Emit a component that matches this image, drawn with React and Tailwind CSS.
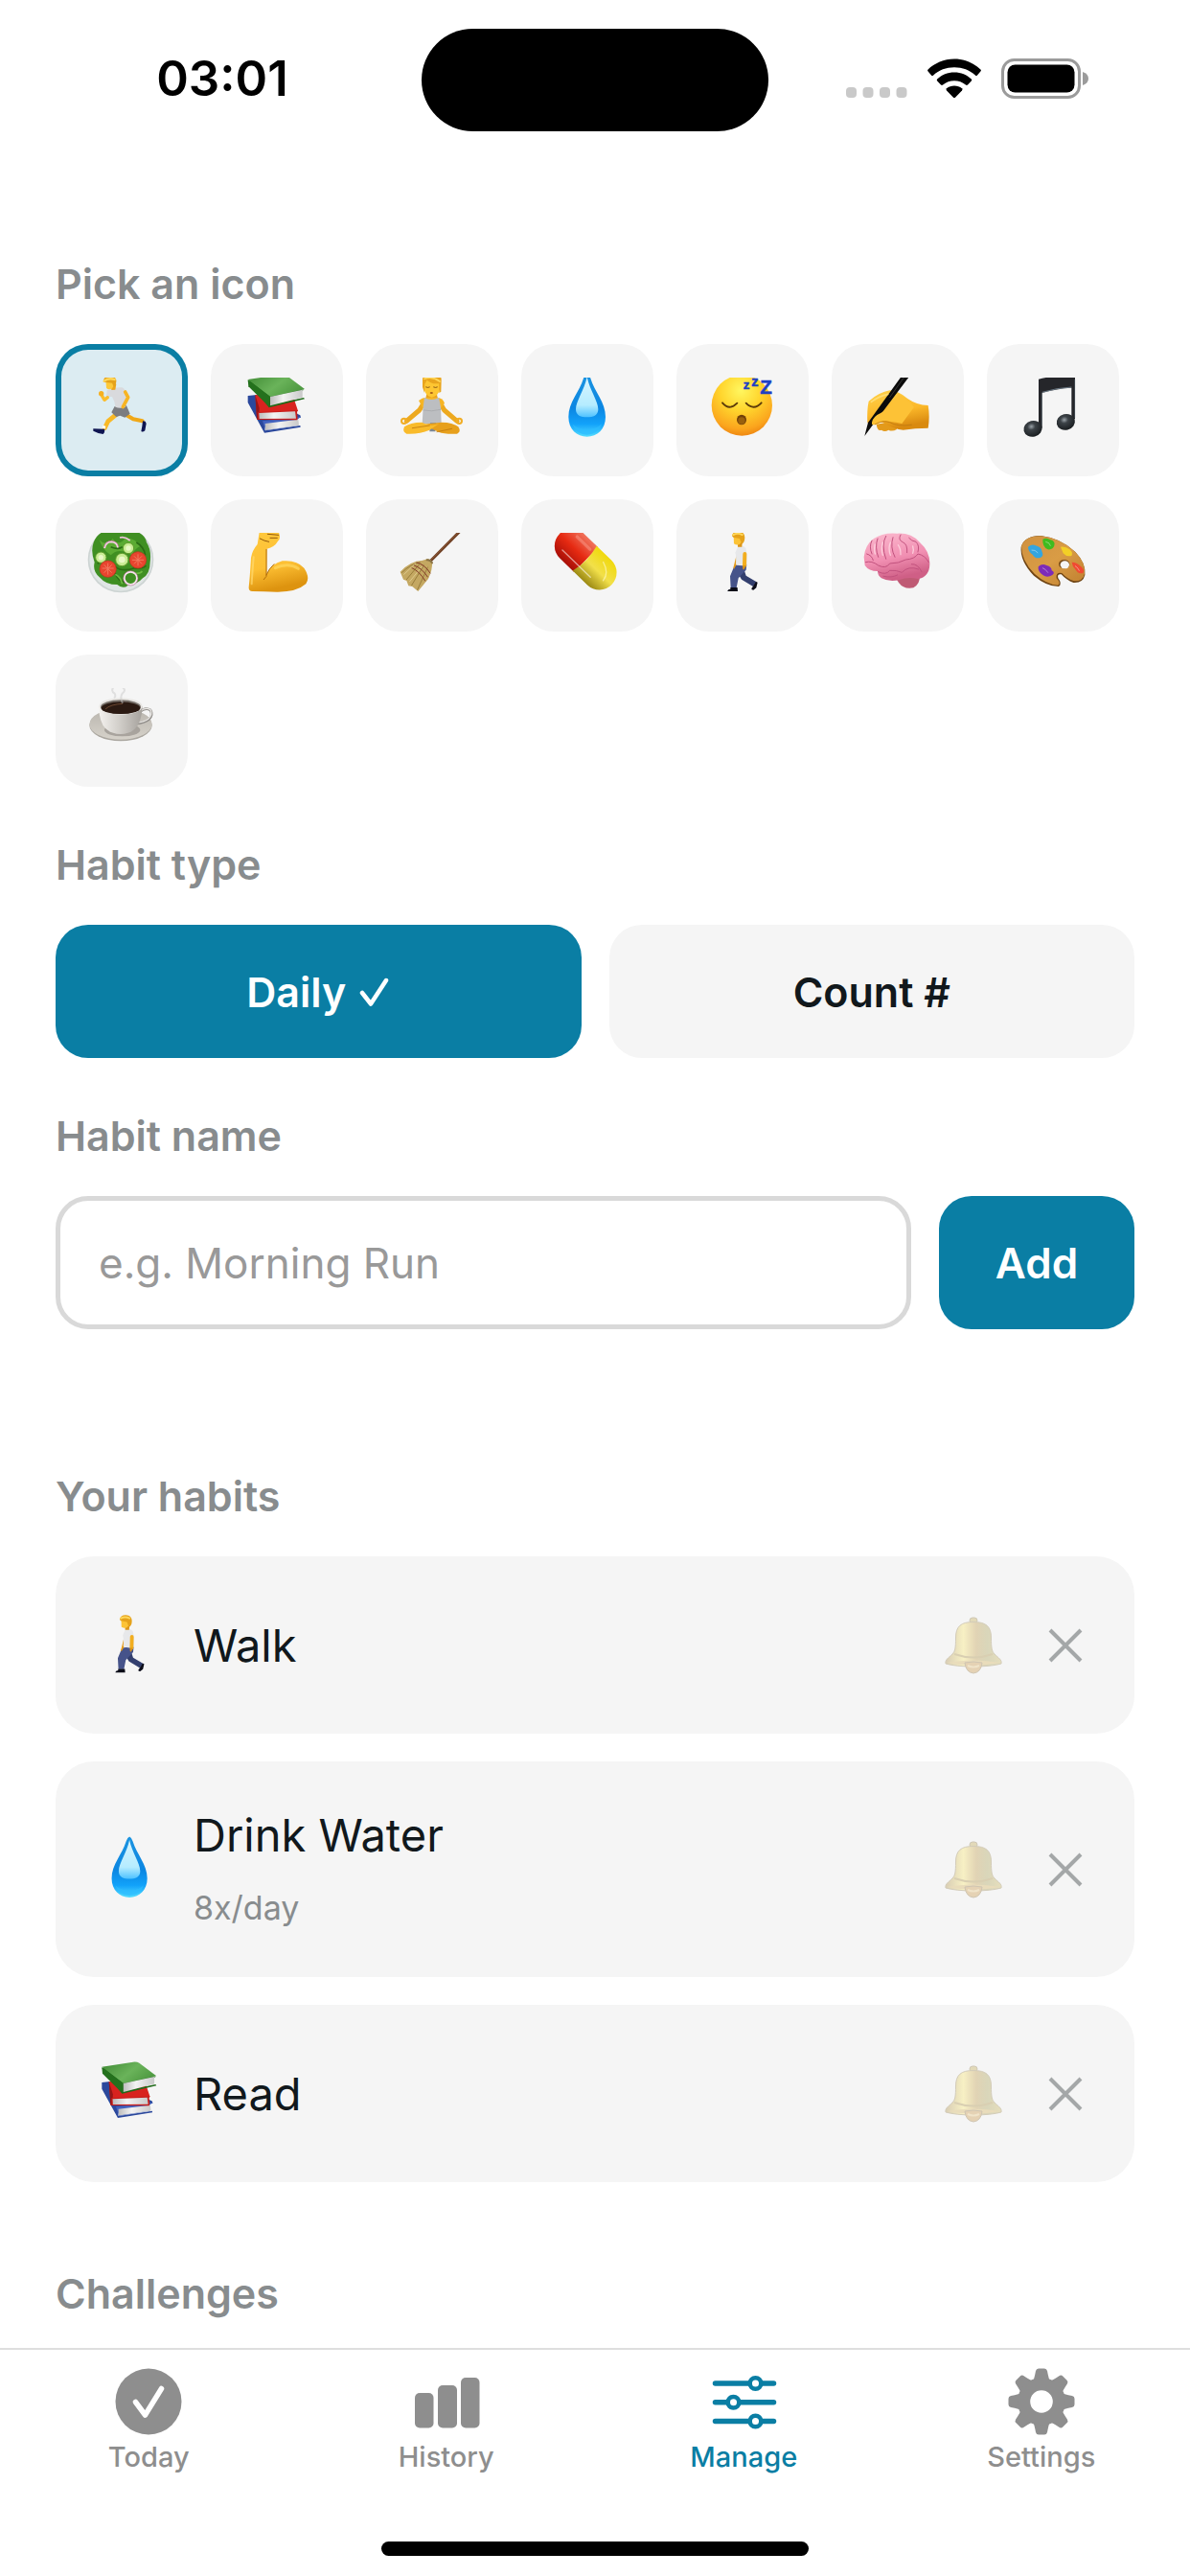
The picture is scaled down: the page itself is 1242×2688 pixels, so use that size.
import { useState } from "react";

/* ---------- Emoji drawings ---------- */

const Runner = () => (
    <g strokeLinecap="round" strokeLinejoin="round">
        <path d="M273 276 L296 290 L325 296" fill="none" stroke="#f0a818" strokeWidth="12" />
        <path d="M326 296 L334 297 L337 304 L333 326 Q326 332 321 328 L324 312 Z" fill="#0f1552" />
        <path d="M247 272 L217 297 L207 318" fill="none" stroke="#f9b926" strokeWidth="14" />
        <path d="M210 312 L201 309 L199 318 L208 321 Z" fill="#fff" />
        <path d="M171 320 L207 321 Q208 330 202 337 Q188 336 171 327 Z" fill="#0f1552" />
        <path d="M238 250 L275 248 L286 273 L270 285 L255 279 L243 283 L228 269 Z" fill="#7c7d80" />
        <path d="M214 200 Q240 188 262 191 Q276 200 272 214 L272 252 Q255 258 240 252 Q238 232 230 220 L212 221 Z" fill="#d9dadd" />
        <path d="M216 222 L206 230 L196 213" fill="none" stroke="#fbbd2c" strokeWidth="10" />
        <circle cx="196" cy="210" r="8" fill="#f6b021" />
        <path d="M271 205 L280 222 L264 252" fill="none" stroke="#f7b423" strokeWidth="11" />
        <path d="M227 182 L243 180 L240 198 L228 199 Z" fill="#eda51c" />
        <path d="M210 166 L236 163 Q240 183 230 194 Q218 200 212 192 Z" fill="#fdc93a" />
        <path d="M203 174 Q202 156 220 156 Q240 154 243 168 Q244 184 236 191 L230 177 L212 175 Z" fill="#e5a21b" />
        <path d="M205 171 Q218 160 238 166" fill="none" stroke="#ffd75a" strokeWidth="7" />
    </g>
);

const Books = () => (
    <g strokeLinejoin="round">
        <defs>
            <linearGradient id="bookGreen" x1="0" y1="0" x2="1" y2="0.5">
                <stop offset="0" stopColor="#3f8a34" />
                <stop offset="0.6" stopColor="#6ab35a" />
                <stop offset="1" stopColor="#4f9a42" />
            </linearGradient>
            <linearGradient id="bookPages" x1="0" y1="0" x2="1" y2="0">
                <stop offset="0" stopColor="#bdbdbd" />
                <stop offset="0.4" stopColor="#f3f3f3" />
                <stop offset="1" stopColor="#c9c9c9" />
            </linearGradient>
        </defs>
        <path d="M654 217 L682 214 L818 278 L820 285 L705 300 L708 326 L818 310 L819 315 L706 333 L654 238 Z" fill="#2b489c" />
        <path d="M700 296 L820 283 L808 292 L811 309 L710 326 Z" fill="#4262bf" />
        <path d="M708 304 L812 291 L814 309 L709 325 Z" fill="url(#bookPages)" />
        <path d="M677 214 L796 219 L811 264 L683 292 Z" fill="#d8231f" />
        <path d="M677 214 L690 255 L688 292 L682 290 Z" fill="#971616" />
        <path d="M685 268 L811 262 L808 268 L810 288 L808 293 L686 292 Z" fill="#c71d1b" />
        <path d="M689 271 L802 266 L805 288 L690 289 Z" fill="url(#bookPages)" />
        <path d="M654 170 L718 251 L720 254 L832 227 L829 223 L725 245 L830 198 L690 172 Z" fill="#1e6a18" />
        <path d="M654 166 L761 150 Q770 150 776 154 L832 196 L724 220 Z" fill="url(#bookGreen)" />
        <path d="M654 167 L724 219 L720 251 L656 188 Z" fill="#24711d" />
        <path d="M724 220 L825 198 L825 222 L724 248 Z" fill="url(#bookPages)" />
    </g>
);

const Yoga = () => (
    <g strokeLinecap="round" strokeLinejoin="round">
        <path d="M254 205 L283 205 L288 226 L250 226 Z" fill="#e9a11b" />
        <path d="M245 238 L230 262 L190 296" fill="none" stroke="#eda91f" strokeWidth="15" />
        <path d="M294 238 L308 262 L348 296" fill="none" stroke="#eda91f" strokeWidth="15" />
        <circle cx="182" cy="296" r="8" fill="none" stroke="#f1ad24" strokeWidth="6" />
        <circle cx="355" cy="296" r="8" fill="none" stroke="#f1ad24" strokeWidth="6" />
        <path d="M228 232 Q240 222 252 222 L286 222 Q304 224 309 240 L297 256 L241 256 Z" fill="#f6b526" />
        <path d="M246 222 Q268 236 291 222 L297 252 L299 304 L239 304 L242 252 Z" fill="#bcbec1" />
        <path d="M242 262 Q268 268 297 260" fill="none" stroke="#a3a5a8" strokeWidth="2" />
        <path d="M264 302 L282 302 L280 329 L262 329 Z" fill="#7b8796" />
        <path d="M300 300 Q335 300 352 314 Q362 330 348 336 Q310 338 290 330 L240 306 Z" fill="#e7a01c" />
        <path d="M238 300 Q200 300 183 314 Q176 330 190 336 Q230 338 262 324 L292 304 Q265 316 238 300 Z" fill="#f9bb2b" />
        <path d="M208 318 L262 310 M285 330 L332 320" fill="none" stroke="#bf7a10" strokeWidth="2.5" />
        <path d="M243 168 H295 V194 Q290 218 269 222 Q249 218 244 194 Z" fill="#fdc632" />
        <path d="M240 190 V166 Q242 142 269 142 Q297 142 299 166 L298 204 L292 208 V178 Q270 182 254 168 L247 180 L246 208 Z" fill="#e9a51d" />
        <path d="M246 164 Q270 154 294 172" fill="none" stroke="#ffd658" strokeWidth="5" />
        <path d="M251 190 Q257 193 262 190 M275 190 Q281 193 286 190" fill="none" stroke="#6f4210" strokeWidth="2.5" />
        <ellipse cx="268" cy="208" rx="5" ry="2.5" fill="#8a3b12" />
    </g>
);

const Drop = () => (
    <g>
        <defs>
            <linearGradient id="dropBody" x1="0" y1="0" x2="0" y2="1">
                <stop offset="0" stopColor="#1c94e0" />
                <stop offset="0.55" stopColor="#0b86e2" />
                <stop offset="0.8" stopColor="#12a2fa" />
                <stop offset="1" stopColor="#53dcff" />
            </linearGradient>
            <linearGradient id="dropShine" x1="0" y1="0" x2="0" y2="1">
                <stop offset="0" stopColor="#d9f5ff" />
                <stop offset="0.7" stopColor="#b5ecff" />
                <stop offset="1" stopColor="#4ec2ff" />
            </linearGradient>
        </defs>
        <path d="M754 147 Q748 149 743 162 C730 205 696 236 696 283 C696 322 722 345 754 345 C786 345 812 322 812 283 C812 236 778 205 765 162 Q760 149 754 147 Z" fill="url(#dropBody)" />
        <path d="M754 158 C746 198 719 234 719 259 C719 279 735 284 754 284 C773 284 789 279 789 259 C789 234 762 198 754 158 Z" fill="url(#dropShine)" />
        <path d="M708 305 Q720 338 754 339 Q788 338 800 305 Q785 322 754 322 Q723 322 708 305 Z" fill="#2cbcff" opacity="0.7" />
    </g>
);

const Sleeping = () => (
    <g strokeLinecap="round">
        <defs>
            <radialGradient id="sleepFace" cx="0.48" cy="0.25" r="0.75">
                <stop offset="0" stopColor="#fff760" />
                <stop offset="0.45" stopColor="#ffd52d" />
                <stop offset="0.85" stopColor="#fba51d" />
                <stop offset="1" stopColor="#ef8812" />
            </radialGradient>
        </defs>
        <circle cx="1239" cy="247" r="95" fill="url(#sleepFace)" />
        <path d="M1178 239 Q1200 265 1224 240 M1252 240 Q1276 265 1300 239" fill="none" stroke="#5c3b0a" strokeWidth="5.5" />
        <ellipse cx="1238" cy="292" rx="15" ry="16" fill="#703f08" />
        <ellipse cx="1238" cy="295" rx="11" ry="11" fill="#99600d" />
    </g>
);

const SleepLetters = () => (
    <g fill="#1d3fc4" stroke="#1d3fc4" strokeWidth="1.5" fontFamily="Liberation Sans, sans-serif" fontWeight="700">
        <text x="1243" y="196" fontSize="40">z</text>
        <text x="1269" y="186" fontSize="44">z</text>
        <text x="1296" y="212" fontSize="62">Z</text>
    </g>
);

const Writing = () => (
    <g strokeLinecap="round" strokeLinejoin="round">
        <defs>
            <linearGradient id="writeHand" x1="0" y1="0" x2="0.3" y2="1">
                <stop offset="0" stopColor="#ffd24b" />
                <stop offset="0.6" stopColor="#fcb92a" />
                <stop offset="1" stopColor="#d98a10" />
            </linearGradient>
        </defs>
        <path d="M220 306 Q224 330 236 324 Q246 332 258 324 Q270 330 284 322 L280 296 Z" fill="#e39a1b" />
        <path d="M196 234 Q228 206 262 200 Q290 202 318 226 Q346 246 382 247 Q388 282 382 318 Q340 318 304 324 Q276 322 240 300 L192 302 Q190 262 196 234 Z" fill="url(#writeHand)" />
        <path d="M297 158 L322 158 L208 309 L183 343 L194 301 Z" fill="#0b0b0b" />
        <path d="M306 160 L262 222" stroke="#4a4a4a" strokeWidth="2" />
        <path d="M206 300 Q210 282 232 272 Q254 262 268 242 L290 212 Q322 230 338 252 L300 304 Q262 296 240 296 Q218 312 206 306 Z" fill="#fdc236" />
        <path d="M216 306 Q240 292 262 300 Q286 314 330 308" fill="none" stroke="#bf7a10" strokeWidth="2.5" />
        <path d="M204 236 Q228 218 256 212" fill="none" stroke="#ffdd74" strokeWidth="5" />
    </g>
);

const Music = () => (
    <g>
        <defs>
            <radialGradient id="noteHead" cx="0.45" cy="0.35" r="0.7">
                <stop offset="0" stopColor="#9aa2a8" />
                <stop offset="0.3" stopColor="#3c4247" />
                <stop offset="1" stopColor="#15181b" />
            </radialGradient>
        </defs>
        <path d="M727 165 Q782 152 841 148 V290 H830 V192 Q785 194 738 208 V318 H727 Z" fill="#25262a" />
        <path d="M738 206 Q785 192 830 190" fill="none" stroke="#8ea2b2" strokeWidth="2" />
        <path d="M840 166 V286 M737 210 V308" fill="none" stroke="#5b6a76" strokeWidth="1.5" />
        <ellipse cx="709" cy="320" rx="29" ry="25" transform="rotate(-14 709 320)" fill="url(#noteHead)" />
        <ellipse cx="812" cy="299" rx="29" ry="25" transform="rotate(-14 812 299)" fill="url(#noteHead)" />
    </g>
);

const Salad = () => (
    <g>
        <circle cx="257" cy="730" r="103" fill="#cdd4d3" />
        <circle cx="257" cy="730" r="98" fill="#e0e6e5" />
        <path d="M172 676 Q186 640 220 640 Q262 626 300 640 Q334 650 338 676 Q354 700 349 738 Q349 774 326 788 Q308 808 280 810 Q264 824 246 808 Q210 808 192 786 Q168 768 175 738 Q162 704 172 676 Z" fill="#3f8f22" />
        <path d="M190 668 Q210 690 232 664 Q250 690 270 664 Q300 660 318 688 Q300 696 292 716 Q250 690 226 716 Q200 700 190 668 Z" fill="#5bab33" />
        <path d="M184 742 Q208 730 240 752 Q262 770 300 756 Q330 760 336 748 M238 770 Q250 800 274 800 M226 690 Q250 700 262 690 M306 676 Q330 690 334 716" fill="none" stroke="#2a6c14" strokeWidth="5" />
        <path d="M240 776 Q256 784 262 806 M296 772 Q318 776 324 766" fill="none" stroke="#6cba40" strokeWidth="5" />
        <path d="M206 694 Q210 674 228 674 Q246 676 248 692" fill="none" stroke="#f3d3e4" strokeWidth="6" />
        <path d="M204 692 Q210 671 228 671 Q248 673 250 690" fill="none" stroke="#b84a86" strokeWidth="1.5" />
        <path d="M254 661 Q270 656 286 670" fill="none" stroke="#efc5dc" strokeWidth="5" />
        <g fill="#c9ec94" stroke="#5f9c2a" strokeWidth="3">
            <circle cx="195" cy="723" r="17" />
            <circle cx="281" cy="694" r="17" />
            <circle cx="261" cy="730" r="20" />
        </g>
        <g fill="#e9f8c6">
            <circle cx="195" cy="723" r="8" />
            <circle cx="281" cy="694" r="8" />
            <circle cx="261" cy="730" r="10" />
        </g>
        <g fill="#e8452f" stroke="#c52f1e" strokeWidth="2">
            <circle cx="217" cy="759" r="26" />
            <circle cx="311" cy="731" r="26" />
        </g>
        <path d="M199 757 H235 M217 741 V777 M205 746 L229 771 M229 746 L205 771 M293 731 H329 M311 713 V749 M299 719 L323 743 M323 719 L299 743" stroke="#f37a60" strokeWidth="3" />
        <circle cx="288" cy="788" r="20" fill="none" stroke="#f6e4ec" strokeWidth="6" />
        <circle cx="288" cy="788" r="23" fill="none" stroke="#b0578c" strokeWidth="1.5" />
    </g>
);

const Muscle = () => (
    <g strokeLinecap="round" strokeLinejoin="round">
        <defs>
            <linearGradient id="armSkin" x1="0" y1="0" x2="0.2" y2="1">
                <stop offset="0" stopColor="#ffc93e" />
                <stop offset="0.65" stopColor="#fdc034" />
                <stop offset="1" stopColor="#dd930f" />
            </linearGradient>
        </defs>
        <path d="M691 638 Q700 628 724 632 Q748 632 752 648 Q758 664 748 672 Q738 690 714 696 L713 776 Q728 742 762 734 Q808 730 830 756 Q850 786 836 806 Q806 832 744 831 Q706 830 668 829 Q656 828 657 816 Q660 790 664 724 Q668 700 684 682 Z" fill="url(#armSkin)" />
        <path d="M712 698 V782 L704 792 M712 778 Q720 758 736 744" fill="none" stroke="#b16d0a" strokeWidth="3" />
        <path d="M716 650 L750 653 M724 662 L746 662 M692 664 Q706 672 720 674" fill="none" stroke="#93590b" strokeWidth="3" />
        <path d="M672 722 Q668 770 666 806" fill="none" stroke="#ffda70" strokeWidth="6" opacity="0.7" />
        <path d="M740 756 Q780 738 812 758" fill="none" stroke="#ffd860" strokeWidth="9" opacity="0.7" />
    </g>
);

const Broom = () => (
    <g strokeLinecap="round" strokeLinejoin="round">
        <path d="M266 733 L360 638" stroke="#6f4024" strokeWidth="9" strokeLinecap="butt" />
        <path d="M268 729 L360 636" stroke="#9a6440" strokeWidth="2" />
        <path d="M250 729 Q262 724 270 736 Q272 760 258 790 L226 829 L208 814 L196 812 L190 796 L180 792 L170 768 Q202 734 238 733 Z" fill="#c4a862" />
        <path d="M176 770 Q202 744 232 738 M190 792 L230 744 M206 810 L244 748 M224 824 L256 754" fill="none" stroke="#8f7434" strokeWidth="2.5" />
        <path d="M182 776 L218 742 M200 798 L238 752" fill="none" stroke="#e2cf93" strokeWidth="2.5" />
        <path d="M222 739 Q246 744 264 772 M214 748 Q238 756 256 784 M207 756 Q230 766 248 796" fill="none" stroke="#7d3224" strokeWidth="2.8" />
        <path d="M254 731 Q264 730 270 740" fill="none" stroke="#8a7344" strokeWidth="6" />
    </g>
);

const Pill = () => (
    <g>
        <defs>
            <linearGradient id="pillRed" x1="0" y1="0" x2="0" y2="1">
                <stop offset="0" stopColor="#f0735c" />
                <stop offset="0.5" stopColor="#e62a12" />
                <stop offset="1" stopColor="#a80f08" />
            </linearGradient>
            <linearGradient id="pillYellow" x1="0" y1="0" x2="0" y2="1">
                <stop offset="0" stopColor="#f0d90c" />
                <stop offset="0.5" stopColor="#f2e04a" />
                <stop offset="1" stopColor="#9c8a14" />
            </linearGradient>
        </defs>
        <g transform="translate(751 730) rotate(44)">
            <path d="M0 -54 H-62 A54 54 0 0 0 -62 54 H0 Z" fill="url(#pillRed)" />
            <path d="M-6 -54 H58 A54 54 0 0 1 58 54 H-6 Q8 0 -6 -54 Z" fill="url(#pillYellow)" />
            <path d="M-74 30 H48" stroke="#fff" strokeWidth="4" strokeLinecap="round" opacity="0.55" />
            <path d="M44 -32 Q82 -20 84 10" fill="none" stroke="#fffbd0" strokeWidth="4" strokeLinecap="round" opacity="0.6" />
            <path d="M-70 -32 H-14" stroke="#ffb8aa" strokeWidth="10" strokeLinecap="round" opacity="0.35" />
        </g>
    </g>
);

const Walker = () => (
    <g strokeLinecap="round" strokeLinejoin="round">
        <path d="M1222 750 L1242 750 L1252 780 L1285 800 L1274 814 L1238 792 L1226 772 Z" fill="#333f6e" />
        <path d="M1272 816 L1283 799 L1288 801 L1284 818 L1275 825 Q1268 825 1269 820 Z" fill="#0b0c18" />
        <path d="M1216 748 L1254 744 L1252 762 L1228 788 L1222 818 L1204 818 L1202 782 Z" fill="#46538a" />
        <path d="M1203 817 H1225 L1226 829 H1194 Q1194 823 1203 822 Z" fill="#0b0c18" />
        <path d="M1222 716 L1214 748 Q1210 756 1214 760 L1222 746 Z" fill="#e49b19" />
        <path d="M1226 690 Q1240 682 1251 694 Q1256 712 1255 746 Q1238 752 1220 744 Q1222 716 1218 708 Z" fill="#e7e8ea" />
        <path d="M1248 712 L1247 748" fill="none" stroke="#f2ae20" strokeWidth="12" />
        <path d="M1242 748 Q1240 764 1246 760 L1252 748" fill="#dc9315" />
        <path d="M1226 676 L1240 676 L1239 690 L1226 690 Z" fill="#dd9618" />
        <path d="M1213 656 H1240 Q1242 672 1232 682 Q1222 686 1214 680 Z" fill="#fcc336" />
        <path d="M1208 656 Q1210 641 1228 641 Q1248 643 1248 660 Q1248 676 1238 681 L1232 664 L1212 660 Z" fill="#e5a21b" />
        <path d="M1212 652 Q1226 645 1240 652" fill="none" stroke="#ffd75a" strokeWidth="6" />
    </g>
);

const Brain = () => (
    <g strokeLinecap="round" strokeLinejoin="round">
        <defs>
            <linearGradient id="brainPink" x1="0" y1="0" x2="0.3" y2="1">
                <stop offset="0" stopColor="#fcbcd0" />
                <stop offset="0.6" stopColor="#f18fb2" />
                <stop offset="1" stopColor="#cf5f86" />
            </linearGradient>
        </defs>
        <path d="M284 792 Q320 768 356 776 Q358 806 336 818 Q306 824 290 802 Z" fill="#bf5a74" />
        <path d="M181 722 Q184 684 212 664 Q240 644 286 648 Q330 646 356 676 Q388 704 387 744 Q386 784 350 790 Q320 782 290 794 Q258 800 236 788 Q224 780 224 766 Q196 766 184 748 Z" fill="url(#brainPink)" />
        <path d="M186 738 Q206 732 226 748 Q250 760 262 742 Q290 742 312 730 Q340 728 350 712 Q372 716 384 738 M206 670 Q196 690 206 712 M224 664 Q214 690 226 722 M250 656 Q234 684 250 728 M272 660 Q262 690 278 722 M296 652 Q286 668 304 676 Q318 682 316 708 M322 662 Q330 672 344 674 Q356 686 350 706 M226 768 Q250 780 262 764 Q282 762 300 770 Q320 748 352 760 M242 782 Q268 788 286 778 M330 744 Q350 742 362 768 M190 712 Q206 716 210 732" fill="none" stroke="#c2527e" strokeWidth="3" />
        <path d="M216 682 Q212 700 216 712 M240 676 Q234 698 240 716 M264 676 Q256 694 264 716 M288 684 Q296 694 296 714 M334 688 Q338 700 334 710" fill="none" stroke="#ffd9e4" strokeWidth="4" opacity="0.8" />
    </g>
);

const Palette = () => (
    <g strokeLinejoin="round">
        <defs>
            <linearGradient id="paletteWood" x1="0" y1="0" x2="1" y2="1">
                <stop offset="0" stopColor="#cf9140" />
                <stop offset="0.5" stopColor="#d99c45" />
                <stop offset="1" stopColor="#c08030" />
            </linearGradient>
        </defs>
        <path d="M672 690 Q684 654 734 655 Q796 662 842 706 Q876 742 872 778 Q866 804 836 802 Q814 794 798 776 Q784 774 788 788 Q802 806 790 814 Q752 814 712 780 Q668 734 672 690 Z" fill="#6f4413" />
        <path d="M673 688 Q684 655 734 656 Q796 662 842 706 Q876 742 871 774 Q866 798 838 797 Q816 790 800 772 Q780 768 783 788 Q798 804 788 810 Q752 808 714 774 Q672 732 673 688 Z" fill="url(#paletteWood)" />
        <ellipse cx="807" cy="744" rx="17" ry="14" fill="#7a4c17" />
        <ellipse cx="809" cy="746" rx="14" ry="12" fill="#f5f5f5" />
        <path d="M694 690 Q706 680 718 686 Q736 690 738 706 Q744 718 732 724 Q716 728 708 714 Q694 704 694 690 Z" fill="#34a5df" />
        <path d="M740 666 Q752 660 764 668 Q780 672 776 686 Q772 700 756 698 Q738 690 740 666 Z" fill="#3fbb1f" />
        <path d="M796 690 Q812 688 824 698 Q836 708 830 718 Q814 722 804 710 Z" fill="#f3cf26" />
        <path d="M831 738 Q848 738 860 752 Q872 762 866 772 Q850 776 842 760 Q832 750 831 738 Z" fill="#f04a32" />
        <path d="M726 752 Q738 740 752 748 Q768 752 768 764 Q780 770 770 778 Q754 788 740 778 Q724 768 726 752 Z" fill="#7d2bb8" />
        <path d="M706 700 Q716 698 724 708 M750 674 Q762 676 764 686 M740 756 Q750 760 756 770 M842 750 Q850 754 854 764" fill="none" stroke="#fff" strokeWidth="3" strokeLinecap="round" opacity="0.4" />
    </g>
);

const Coffee = () => (
    <g strokeLinecap="round">
        <defs>
            <linearGradient id="cupBody" x1="0" y1="0" x2="1" y2="0">
                <stop offset="0" stopColor="#f4f2ef" />
                <stop offset="0.5" stopColor="#cfccc7" />
                <stop offset="1" stopColor="#a5a19c" />
            </linearGradient>
            <linearGradient id="saucer" x1="0" y1="0" x2="0" y2="1">
                <stop offset="0" stopColor="#b9b5ae" />
                <stop offset="1" stopColor="#d6d2ca" />
            </linearGradient>
        </defs>
        <ellipse cx="257" cy="1247" rx="98" ry="50" fill="#aaa69f" />
        <ellipse cx="257" cy="1244" rx="98" ry="48" fill="url(#saucer)" />
        <ellipse cx="262" cy="1262" rx="56" ry="20" fill="#8d8983" opacity="0.6" />
        <path d="M316 1206 Q334 1190 350 1200 Q360 1216 344 1230 Q330 1240 306 1242" fill="none" stroke="#8f8c88" strokeWidth="8" />
        <path d="M316 1205 Q334 1189 350 1199 Q358 1214 343 1228 Q330 1238 306 1240" fill="none" stroke="#e9e7e4" strokeWidth="4" />
        <path d="M188 1188 Q190 1240 210 1258 Q226 1274 256 1275 Q288 1274 302 1258 Q322 1240 325 1188 Z" fill="url(#cupBody)" />
        <ellipse cx="257" cy="1188" rx="68" ry="26" fill="#e8e6e3" />
        <ellipse cx="257" cy="1190" rx="63" ry="22" fill="#77706a" />
        <ellipse cx="257" cy="1193" rx="61" ry="19" fill="#2b1a12" />
        <path d="M210 1196 Q224 1182 262 1180" fill="none" stroke="#6a4630" strokeWidth="3" />
        <path d="M236 1126 Q224 1140 238 1148 Q242 1156 238 1160 M262 1128 Q276 1138 262 1148 Q254 1160 262 1176" fill="none" stroke="#c9c9c9" strokeWidth="6" opacity="0.5" />
    </g>
);

// x / y is where each drawing starts on the shared sheet
const EMOJIS = {
    run: { label: "Running", x: 143, y: 160, Art: Runner },
    books: { label: "Books", x: 628, y: 160, Art: Books },
    yoga: { label: "Yoga", x: 153, y: 160, Art: Yoga },
    drop: { label: "Water drop", x: 638, y: 160, Art: Drop },
    sleep: { label: "Sleep", x: 1124, y: 160, Art: Sleeping, Letters: SleepLetters },
    write: { label: "Writing", x: 170, y: 160, Art: Writing },
    music: { label: "Music", x: 655, y: 160, Art: Music },
    salad: { label: "Salad", x: 143, y: 646, Art: Salad },
    muscle: { label: "Muscle", x: 628, y: 646, Art: Muscle },
    broom: { label: "Broom", x: 153, y: 646, Art: Broom },
    pill: { label: "Pill", x: 638, y: 646, Art: Pill },
    walk: { label: "Walking", x: 1124, y: 646, Art: Walker },
    brain: { label: "Brain", x: 170, y: 646, Art: Brain },
    palette: { label: "Palette", x: 655, y: 646, Art: Palette },
    coffee: { label: "Coffee", x: 143, y: 1131, Art: Coffee },
};

// the picker cuts the top of the drawing off, the list shows all of it
const Emoji = ({ name, cut = false, className }) => {
    const { x, y, Art, Letters } = EMOJIS[name];
    if (!cut) {
        return (
            <svg viewBox={`${x} ${y - 18} 225 225`} className={className} aria-hidden="true">
                <Art />
                {Letters && <Letters />}
            </svg>
        );
    }
    return (
        <svg viewBox={`${x} ${y} 234 207`} className={`overflow-visible ${className}`} aria-hidden="true">
            <clipPath id={`cut-${name}`}>
                <rect x={x} y={y} width="234" height="207" />
            </clipPath>
            <g clipPath={`url(#cut-${name})`}>
                <Art />
            </g>
            {Letters && <Letters />}
        </svg>
    );
};

const Bell = () => (
    <svg viewBox="0 0 60 60" className="size-15" aria-hidden="true">
        <defs>
            <linearGradient id="bellGold" x1="0" y1="0" x2="1" y2="0">
                <stop offset="0" stopColor="#d8cdb4" />
                <stop offset="0.32" stopColor="#f7f0c4" />
                <stop offset="0.55" stopColor="#e1d3b4" />
                <stop offset="0.75" stopColor="#d9d6ba" />
                <stop offset="1" stopColor="#e6debc" />
            </linearGradient>
        </defs>
        <rect x="26" y="1" width="8" height="6" rx="3" fill="#e2d9b8" stroke="#cfc8b6" />
        <path d="M11.500 22 C11.500 10 17 5.500 30 5.500 C43 5.500 48.500 10 48.500 22 C48.500 32 49 36 52 39 C56 43 60 45 59 49 C46 53 14 53 1 49 C0 45 4 43 8 39 C11 36 11.500 32 11.500 22 Z" fill="url(#bellGold)" stroke="#d3ccb9" />
        <path d="M10 39 Q30 46 50 39" fill="none" stroke="#d9cfb2" strokeWidth="2" />
        <path d="M2 48 Q30 43 58 48 Q30 53 2 48 Z" fill="#e9dcbb" />
        <path d="M21 48 Q30 46 39 48 Q38 58 30 59 Q22 58 21 48 Z" fill="#e5d2b4" stroke="#cfc5b2" />
        <path d="M24 51 Q30 54 36 51" fill="none" stroke="#f0e4ca" strokeWidth="2" />
    </svg>
);

const Cross = () => (
    <svg viewBox="0 0 36 36" className="size-9" aria-hidden="true">
        <path d="M2 2 L34 34 M34 2 L2 34" stroke="#a4a7a8" strokeWidth="4" />
    </svg>
);

/* ---------- Status bar ---------- */

const StatusBar = () => (
    <header className="flex items-center pt-[30px]">
        <div className="flex-1 pb-1 pl-6 text-center text-[51px] leading-[60px] font-semibold text-black">03:01</div>
        <div className="h-[107px] w-[362px] rounded-full bg-black"></div>
        <div className="flex flex-1 items-center justify-center gap-[21px] pr-6 pb-1">
            <svg viewBox="0 0 64 42" className="h-[42px] w-16" aria-hidden="true">
                <g fill="#c9c9c9">
                    <rect x="0" y="30" width="11" height="11" rx="4" />
                    <rect x="17.5" y="30" width="11" height="11" rx="4" />
                    <rect x="35" y="30" width="11" height="11" rx="4" />
                    <rect x="52.5" y="30" width="11" height="11" rx="4" />
                </g>
            </svg>
            <svg viewBox="0 0 56 42" className="h-[42px] w-14" aria-hidden="true">
                <path d="M28 0.5 C39 0.5 48.5 5 55.4 11.4 Q56.4 12.5 55.4 13.6 L52 17.4 Q51 18.4 49.8 17.4 C44 12 36.500 9.200 28 9.200 C19.500 9.200 12 12 6.200 17.400 Q5 18.4 4 17.4 L0.6 13.600 Q-0.4 12.5 0.6 11.400 C7.500 5 17 0.5 28 0.5 Z" />
                <path d="M28 14.500 C35 14.500 41 17.200 45.800 21.400 Q46.800 22.500 45.800 23.600 L42 27.600 Q41 28.500 39.900 27.600 C36.500 24.700 32.500 23.200 28 23.200 C23.500 23.200 19.500 24.700 16.100 27.600 Q15 28.500 14 27.600 L10.200 23.600 Q9.200 22.500 10.200 21.400 C15 17.200 21 14.500 28 14.500 Z" />
                <path d="M28 28.500 C31 28.500 33.800 29.500 36 31.300 Q37 32.300 36 33.400 L29.200 40.600 Q28 41.600 26.800 40.600 L20 33.400 Q19 32.300 20 31.300 C22.200 29.500 25 28.500 28 28.500 Z" />
            </svg>
            <svg viewBox="0 0 92 42" className="h-[42px] w-[92px]" aria-hidden="true">
                <rect x="1.5" y="1.500" width="80" height="39" rx="12" fill="none" stroke="#9b9b9b" strokeWidth="3" />
                <rect x="6.500" y="6.500" width="70" height="29" rx="8" />
                <path d="M85 14 Q91 16 91 21 Q91 26 85 28 Z" fill="#9b9b9b" />
            </svg>
        </div>
    </header>
);

/* ---------- Tab bar ---------- */

const TABS = [
    {
        name: "Today",
        icon: (
            <>
                <circle cx="35" cy="35" r="34.5" fill="currentColor" />
                <path d="M21.500 35.500 L31.500 49 L48.500 21.500" fill="none" stroke="#fff" strokeWidth="5.500" strokeLinecap="round" strokeLinejoin="round" />
            </>
        ),
    },
    {
        name: "History",
        icon: (
            <g fill="currentColor">
                <rect x="2" y="26" width="19.500" height="36.500" rx="5" />
                <rect x="26" y="18" width="20" height="44.500" rx="5" />
                <rect x="50" y="10" width="19.500" height="52.500" rx="5" />
            </g>
        ),
    },
    {
        name: "Manage",
        icon: (
            <g stroke="currentColor" fill="#fff" strokeLinecap="round">
                <path d="M5.500 16 H66.500 M5.500 35.700 H66.500 M5.500 55.500 H66.500" strokeWidth="5.500" />
                <circle cx="47.500" cy="16" r="5.800" strokeWidth="4.500" />
                <circle cx="24.500" cy="35.700" r="5.800" strokeWidth="4.500" />
                <circle cx="47.500" cy="55.500" r="5.800" strokeWidth="4.500" />
            </g>
        ),
    },
    {
        name: "Settings",
        icon: (
            <g transform="translate(35 35)" fill="currentColor">
                {[0, 45, 90, 135, 180, 225, 270, 315].map((angle) => (
                    <path
                        key={angle}
                        d="M-9 -21 Q-7.500 -24.500 -6.800 -28 L-6 -32 Q-5.400 -34.500 -3 -34.500 H3 Q5.400 -34.500 6 -32 L6.800 -28 Q7.500 -24.500 9 -21 Z"
                        transform={`rotate(${angle})`}
                    />
                ))}
                <circle r="25" />
                <circle r="11.800" fill="#fff" />
            </g>
        ),
    },
];

const TabBar = ({ active, onChange }) => (
    <nav className="border-t-2 border-[#dedede] bg-white pt-[19px] pb-[21px]">
        <div className="grid grid-cols-4">
            {TABS.map((tab) => (
                <button
                    key={tab.name}
                    type="button"
                    onClick={() => onChange(tab.name)}
                    className={`flex flex-col items-center gap-[5px] ${active === tab.name ? "text-[#0a7ea4]" : "text-[#8e8e8e]"}`}
                >
                    <svg viewBox="0 0 70 70" className="size-[70px]" aria-hidden="true">{tab.icon}</svg>
                    <span className="text-[29px] leading-9 font-medium">{tab.name}</span>
                </button>
            ))}
        </div>
        <div className="mx-auto mt-[70px] h-[15px] w-[446px] rounded-full bg-black"></div>
    </nav>
);

/* ---------- Page ---------- */

const headingStyle = "block text-[43px] leading-[52px] font-semibold text-[#888c8e]";

const HabitCard = ({ habit, onRemove }) => (
    <li className="flex min-h-[185px] items-center rounded-[40px] bg-[#f5f5f5] py-12 pr-[54px] pl-10">
        <Emoji name={habit.icon} className="size-18" />
        <div className="ml-8 flex-1 text-[#11181c]">
            <p className="text-[47px] leading-[58px]">{habit.name}</p>
            {habit.goal && <p className="mt-[23px] text-[34px] leading-12 text-[#888c8e]">{habit.goal}</p>}
        </div>
        <div className="flex items-center gap-12">
            <button type="button" aria-label={`Reminder for ${habit.name}`}><Bell /></button>
            <button type="button" aria-label={`Remove ${habit.name}`} onClick={onRemove}><Cross /></button>
        </div>
    </li>
);

const App = () => {
    const [icon, setIcon] = useState("run");
    const [type, setType] = useState("daily");
    const [name, setName] = useState("");
    const [tab, setTab] = useState("Manage");
    const [habits, setHabits] = useState([
        { id: 1, icon: "walk", name: "Walk" },
        { id: 2, icon: "drop", name: "Drink Water", goal: "8x/day" },
        { id: 3, icon: "books", name: "Read" },
    ]);

    const addHabit = (e) => {
        e.preventDefault();
        if (!name.trim()) return;
        setHabits([...habits, { id: Date.now(), icon, name: name.trim() }]);
        setName("");
    };

    const typeStyle = (value) =>
        `flex h-[139px] flex-1 items-center justify-center gap-3.5 rounded-[34px] text-[43px] leading-[52px] font-semibold ${type === value ? "bg-[#0a7ea4] text-white" : "bg-[#f5f5f5] text-[#11181c]"}`;

    return (
        <div className="flex min-h-screen flex-col bg-white font-[Inter,'Liberation_Sans',sans-serif]">
            <StatusBar />

            <main className="flex-1 px-[58px] pt-[133px]">
                <section>
                    <h2 className={headingStyle}>Pick an icon</h2>
                    <div className="mt-[37px] flex flex-wrap gap-6">
                        {Object.keys(EMOJIS).map((key) => (
                            <button
                                key={key}
                                type="button"
                                aria-label={EMOJIS[key].label}
                                aria-pressed={icon === key}
                                onClick={() => setIcon(key)}
                                className={`flex size-[138px] items-center justify-center rounded-[34px] ${icon === key ? "bg-[#dcecf2] ring-6 ring-[#0a7ea4] ring-inset" : "bg-[#f5f5f5]"}`}
                            >
                                <Emoji name={key} cut className="h-[69px] w-[78px]" />
                            </button>
                        ))}
                    </div>
                </section>

                <section className="mt-[55px]">
                    <h2 className={headingStyle}>Habit type</h2>
                    <div className="mt-[37px] flex gap-[29px]">
                        <button type="button" className={typeStyle("daily")} onClick={() => setType("daily")}>
                            Daily
                            <svg viewBox="0 0 32 32" className="size-8" aria-hidden="true">
                                <path d="M3 17 L12 28.500 L28 4" fill="none" stroke="currentColor" strokeWidth="4.500" strokeLinecap="round" strokeLinejoin="round" />
                            </svg>
                        </button>
                        <button type="button" className={typeStyle("count")} onClick={() => setType("count")}>
                            Count #
                        </button>
                    </div>
                </section>

                <form className="mt-[55px]" onSubmit={addHabit}>
                    <label htmlFor="habit-name" className={headingStyle}>Habit name</label>
                    <div className="mt-[37px] flex gap-[29px]">
                        <input
                            id="habit-name"
                            type="text"
                            value={name}
                            onChange={(e) => setName(e.target.value)}
                            placeholder="e.g. Morning Run"
                            className="h-[139px] min-w-0 flex-1 rounded-[34px] border-5 border-[#d9d9d9] px-10 text-[44px] text-[#11181c] placeholder:text-[#999999]"
                        />
                        <button type="submit" className="h-[139px] w-[204px] rounded-[34px] bg-[#0a7ea4] text-[44px] font-semibold text-white">
                            Add
                        </button>
                    </div>
                </form>

                <section className="mt-[148px]">
                    <h2 className={headingStyle}>Your habits</h2>
                    <ul className="mt-[37px] flex flex-col gap-[29px]">
                        {habits.map((habit) => (
                            <HabitCard
                                key={habit.id}
                                habit={habit}
                                onRemove={() => setHabits(habits.filter((h) => h.id !== habit.id))}
                            />
                        ))}
                    </ul>
                </section>

                <section className="mt-[90px]">
                    <h2 className={headingStyle}>Challenges</h2>
                </section>
            </main>

            <TabBar active={tab} onChange={setTab} />
        </div>
    );
};

export default App;
